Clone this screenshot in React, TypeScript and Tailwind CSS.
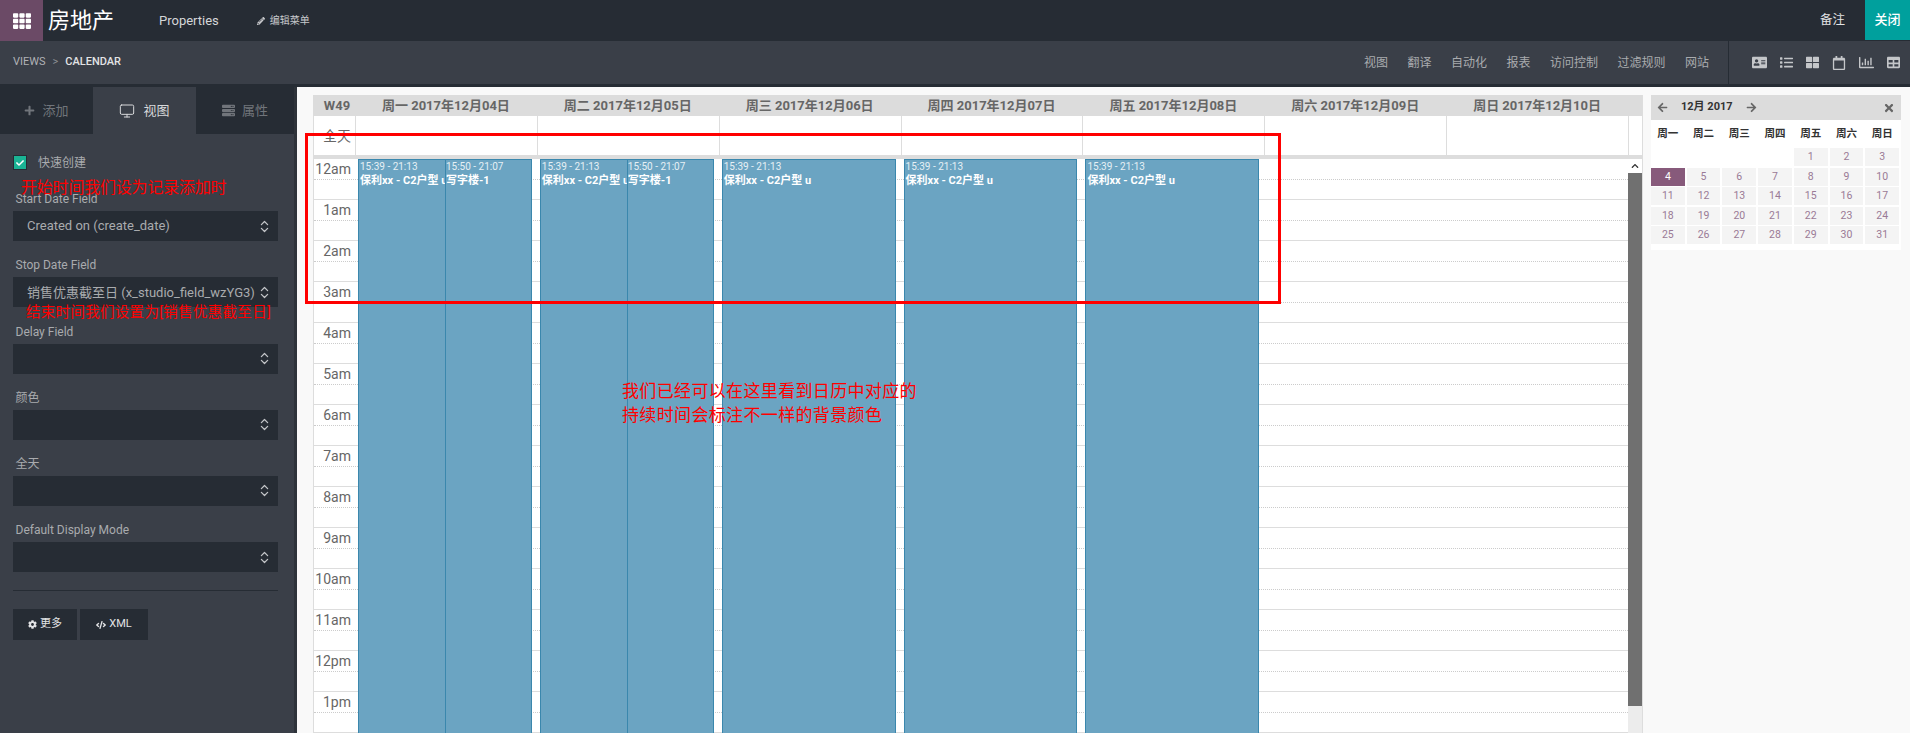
import { ChevronsUpDown, Monitor } from 'lucide-react';
import {
  FaAddressCard,
  FaArrowLeft,
  FaArrowRight,
  FaChevronUp,
  FaCheck,
  FaCode,
  FaCog,
  FaList,
  FaPencilAlt,
  FaPlus,
  FaRegCalendar,
  FaRegChartBar,
  FaServer,
  FaTable,
  FaTh,
  FaThLarge,
  FaTimes,
} from 'react-icons/fa';

const font = "font-['Roboto','Noto_Sans_CJK_SC',sans-serif]";

const menuItems = ['视图', '翻译', '自动化', '报表', '访问控制', '过滤规则', '网站'];
const dayHeads = ['周一 2017年12月04日', '周二 2017年12月05日', '周三 2017年12月06日', '周四 2017年12月07日', '周五 2017年12月08日', '周六 2017年12月09日', '周日 2017年12月10日'];
const hours = ['12am', '1am', '2am', '3am', '4am', '5am', '6am', '7am', '8am', '9am', '10am', '11am', '12pm', '1pm'];
const fields = ['Start Date Field', 'Stop Date Field', 'Delay Field', '颜色', '全天', 'Default Display Mode'];
const miniHead = ['周一', '周二', '周三', '周四', '周五', '周六', '周日'];

function Field({ label, value }: { label: string; value?: string }) {
  return (
    <div className="h-[66.2px] flex flex-col justify-end">
      <div className="text-[12px] leading-[14px] text-[#a9abae] pl-[2.5px] mb-[5px]">{label}</div>
      <div className="h-[30px] bg-[#262c34] flex items-center justify-between pl-[14px] pr-[6px] text-[13px] text-[#a9abae] whitespace-nowrap">
        <span>{value}</span>
        <ChevronsUpDown size={15} className="text-[#c4c6c9]" />
      </div>
    </div>
  );
}

function Event({ time, title, first }: { time: string; title: string; first?: boolean }) {
  return (
    <div className={`flex-1 min-w-0 bg-[#6ba4c2] border-y border-r border-[#3a87ad] overflow-hidden whitespace-nowrap text-white ${first ? 'border-l pl-[1px]' : ''}`}>
      <div className="text-[10px] leading-[13px] text-[#e6f0f5]">{time}</div>
      <div className="text-[11px] leading-[15px] font-bold">{title}</div>
    </div>
  );
}

export default function App() {
  return (
    <div className={`${font} relative w-[1910px] h-[733px] overflow-hidden bg-[#f9f9f9]`}>
      {/* 顶栏 */}
      <div className="h-[41px] bg-[#262c34] flex items-center text-white">
        <div className="w-[43px] h-full bg-[#6b4a66] flex items-center justify-center">
          <FaTh size={18} className="text-white" />
        </div>
        <div className="ml-[5px] text-[22px] w-[111px]">房地产</div>
        <div className="text-[13px] text-[#d5d6d8]">Properties</div>
        <div className="ml-[38px] flex items-center gap-[5px] text-[10px] text-[#c8c9cc]">
          <FaPencilAlt size={8} />
          编辑菜单
        </div>
        <div className="ml-auto text-[12.5px] text-[#e2e3e5] mr-[20px]">备注</div>
        <div className="w-[45px] h-[40px] self-start bg-[#00a09d] flex items-center justify-center text-[13px] font-medium">关闭</div>
      </div>

      {/* 第二栏 */}
      <div className="h-[43px] bg-[#3a3f48] flex items-center pl-[13px] text-[11px]">
        <span className="text-[#b0b2b6]">VIEWS</span>
        <span className="text-[#8d9095] mx-[7px]">&gt;</span>
        <span className="text-[#e2e3e5] font-medium">CALENDAR</span>
        <div className="ml-auto flex items-center gap-[19.5px] text-[12px] text-[#a9abae] pr-[19px]">
          {menuItems.map((m) => (
            <span key={m}>{m}</span>
          ))}
        </div>
        <div className="w-[1px] h-full bg-[#262c34]" />
        <div className="w-[181px] flex items-center pl-[23px] gap-[13px] text-[#c4c6c9]">
          <FaAddressCard size={15} />
          <FaList size={13} />
          <FaThLarge size={13} />
          <FaRegCalendar size={14} />
          <FaRegChartBar size={15} />
          <FaTable size={13} />
        </div>
      </div>
      <div className="h-[3px] bg-[#262c34]" />

      <div className="flex h-[646px]">
        {/* 侧边栏 */}
        <div className="w-[297px] shrink-0 bg-[#2e333a] pr-[3px]">
          <div className="h-full bg-[#3a3f48]">
            <div className="h-[47px] flex bg-[#262c34] text-[13px] text-[#71757b]">
              <div className="w-[93px] flex items-center justify-center gap-[7px]">
                <FaPlus size={11} />
                添加
              </div>
              <div className="w-[103px] bg-[#3a3f48] flex items-center justify-center gap-[8px] text-[#d8d9db]">
                <Monitor size={16} strokeWidth={1.5} />
                视图
              </div>
              <div className="flex-1 flex items-center justify-center gap-[7px]">
                <FaServer size={13} />
                属性
              </div>
            </div>
            <div className="pl-[13px] pr-[16px]">
              <div className="flex items-center h-[15px] mt-[21px]">
                <div className="w-[14px] h-[15px] bg-[#1ab394] border border-[#262c34] flex items-center justify-center text-white">
                  <FaCheck size={8} />
                </div>
                <span className="ml-[11px] text-[12px] text-[#a9abae]">快速创建</span>
              </div>
              <div className="mt-[5px]">
                {fields.map((f, i) => (
                  <Field key={f} label={f} value={i === 0 ? 'Created on (create_date)' : i === 1 ? '销售优惠截至日 (x_studio_field_wzYG3)' : undefined} />
                ))}
              </div>
              <div className="h-[1px] bg-[#262c34] mt-[18px]" />
              <div className="flex gap-[3px] mt-[18px] text-[11px] text-[#e2e3e5]">
                <div className="w-[64px] h-[31px] bg-[#262c34] flex items-center justify-center gap-[3px]">
                  <FaCog size={9} />
                  更多
                </div>
                <div className="w-[68px] h-[31px] bg-[#262c34] flex items-center justify-center gap-[3px]">
                  <FaCode size={10} />
                  XML
                </div>
              </div>
            </div>
          </div>
        </div>

        {/* 日历 */}
        <div className="flex-1 flex pt-[8px] pl-[16px] items-start">
          <div className="w-[1330px] border-r border-[#dddddd]">
            <div className="h-[21px] bg-[#dcdcdc] grid grid-cols-[42px_repeat(7,181.86px)_1fr] text-[13px] leading-[21px] font-bold text-[#666666] text-center">
              <div className="pl-[6px]">W49</div>
              {dayHeads.map((d) => (
                <div key={d}>{d}</div>
              ))}
            </div>
            <div className="h-[39px] bg-white border-l border-[#dddddd] grid grid-cols-[41px_repeat(7,181.86px)_1fr]">
              <div className="text-right pr-[4px] pt-[10px] text-[14px] leading-[20px] text-[#666666]">全天</div>
              {dayHeads.map((d) => (
                <div key={d} className="border-l border-[#dddddd]" />
              ))}
              <div className="border-l border-[#dddddd]" />
            </div>
            <div className="h-[4px] bg-[#dddddd]" />
            <div className="relative h-[574px] bg-white overflow-hidden flex border-l border-[#dddddd]">
              <div className="w-[1315px]">
                {hours.map((h) => (
                  <div key={h} className="h-[41px] relative">
                    <div className="h-[21px] border-b border-dotted border-[#cccccc]" />
                    <div className="h-[20px] border-b border-[#dddddd]" />
                    <div className="absolute top-0 left-0 w-[41px] text-right pr-[4px] text-[14px] leading-[20px] text-[#666666]">{h}</div>
                  </div>
                ))}
              </div>
              <div className="w-[14px] bg-[#ececec] flex flex-col">
                <div className="h-[14px] bg-white flex items-center justify-center text-[#333333]">
                  <FaChevronUp size={8} />
                </div>
                <div className="h-[533px] bg-[#707070]" />
              </div>
              {/* 事件 */}
              <div className="absolute inset-y-0 left-0 w-[1315px] grid grid-cols-[41px_repeat(7,181.86px)_1fr]">
                <div />
                {[0, 1, 2, 3, 4].map((i) => (
                  <div key={i} className="pl-[3px] pr-[5px] flex h-[600px]">
                    <Event first time="15:39 - 21:13" title="保利xx - C2户型 u" />
                    {i < 2 && <Event time="15:50 - 21:07" title="写字楼-1" />}
                  </div>
                ))}
              </div>
            </div>
          </div>

          {/* 小日历 */}
          <div className="ml-[8px] w-[250px] bg-white">
            <div className="h-[25px] bg-[#dcdcdc] flex items-center pl-[6px] pr-[6px] text-[#666666]">
              <FaArrowLeft size={11} />
              <span className="ml-[13px] text-[11px] font-bold text-[#333333]">12月 2017</span>
              <span className="ml-[13px]"><FaArrowRight size={11} /></span>
              <span className="ml-auto"><FaTimes size={12} /></span>
            </div>
            <div className="grid grid-cols-7 w-[248px] gap-x-[2px] text-center text-[10.5px] font-bold text-[#333333] h-[28px] items-center">
              {miniHead.map((d) => (
                <div key={d}>{d}</div>
              ))}
            </div>
            <div className="grid grid-cols-7 w-[248px] gap-x-[2px] gap-y-[1.5px] pb-[6px] text-center text-[10.5px] leading-[18px] text-[#9a7a96]">
              {[0, 0, 0, 0].map((_, i) => (
                <div key={i} className="h-[18px]" />
              ))}
              {Array.from({ length: 31 }, (_, i) => i + 1).map((n) => (
                <div key={n} className={n === 4 ? 'h-[18px] bg-[#875a7b] text-white' : 'h-[18px] bg-[#f4f4f4]'}>
                  {n}
                </div>
              ))}
            </div>
          </div>
        </div>
      </div>

      {/* 红色标注 */}
      <div className="absolute left-[305px] top-[133px] w-[976px] h-[171px] border-[3px] border-[#ff0000]" />
      <div className="absolute left-[21px] top-[177px] text-[16px] leading-[22px] tracking-[-0.2px] text-[#ff0000] whitespace-nowrap">开始时间我们设为记录添加时</div>
      <div className="absolute left-[26px] top-[302px] text-[14.5px] leading-[22px] tracking-[0.3px] text-[#ff0000] whitespace-nowrap">结束时间我们设置为[销售优惠截至日]</div>
      <div className="absolute left-[622px] top-[379px] text-[17px] leading-[24px] tracking-[0.35px] text-[#ff0000] whitespace-nowrap">
        我们已经可以在这里看到日历中对应的
        <br />
        持续时间会标注不一样的背景颜色
      </div>
    </div>
  );
}
